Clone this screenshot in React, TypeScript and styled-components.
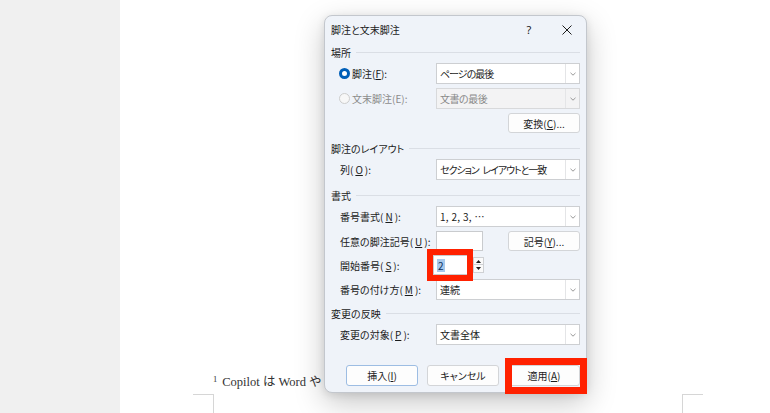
import React from "react";
import styled, { createGlobalStyle, css } from "styled-components";

const GlobalStyle = createGlobalStyle`
  html, body { margin: 0; padding: 0; }
  body { width: 770px; height: 413px; overflow: hidden; background: #ffffff; }
  *, *::before, *::after { box-sizing: border-box; }
`;

const Screen = styled.div`
  display: flex;
  width: 770px;
  height: 413px;
`;

const Gutter = styled.div`
  flex: none;
  width: 120px;
  background: #f0f0f0;
`;

const Page = styled.div`
  position: relative;
  flex: 1;
  background: #ffffff;
  padding: 361px 87px 0 93px;
  display: flex;
  flex-direction: column;
`;

const FootnoteRule = styled.div`
  width: 170px;
  height: 1px;
  background: #a3a3a3;
`;

const FootnoteText = styled.p`
  margin: 10px 0 0;
  font-family: "Liberation Serif", "Noto Sans CJK JP", serif;
  font-size: 12.5px;
  line-height: 16px;
  color: #333333;
  white-space: nowrap;
  sup {
    font-size: 8.5px;
    vertical-align: 4px;
    margin-right: 5px;
  }
`;

const MarkRow = styled.div`
  display: flex;
  justify-content: space-between;
  margin: 4px -20px 0 -20px;
`;

const CornerMark = styled.div<{ $side: "left" | "right" }>`
  width: 21px;
  height: 30px;
  border-top: 1px solid #d6d6d6;
  ${(p) =>
    p.$side === "left"
      ? css`border-right: 1px solid #d6d6d6;`
      : css`border-left: 1px solid #d6d6d6;`}
`;

/* ---------- dialog ---------- */

const Dialog = styled.div`
  position: absolute;
  left: 204px;
  top: 15px;
  width: 263px;
  height: 378px;
  display: flex;
  flex-direction: column;
  background: #eff3f9;
  border: 1px solid #c3c7cd;
  border-radius: 8px;
  box-shadow: 0 10px 30px rgba(0, 0, 0, 0.22), 0 2px 8px rgba(0, 0, 0, 0.1);
  font-family: "Noto Sans CJK JP", "Noto Sans", sans-serif;
  font-feature-settings: "palt";
  font-size: 10px;
  color: #1b1b1b;
`;

const TitleBar = styled.div`
  display: flex;
  align-items: center;
  height: 27px;
  padding-left: 6px;
`;

const Title = styled.div`
  flex: 1;
  font-size: 10px;
`;

const TitleButton = styled.div`
  width: 38px;
  height: 100%;
  display: flex;
  align-items: center;
  justify-content: center;
  font-family: "Noto Sans", sans-serif;
  font-size: 11px;
  color: #1b1b1b;
`;

const Body = styled.div`
  flex: 1;
  display: flex;
  flex-direction: column;
  padding: 2px 6px 0 6px;
`;

const Section = styled.div<{ $mt?: number }>`
  display: flex;
  flex-direction: column;
  gap: 4px;
  margin-top: ${(p) => p.$mt ?? 0}px;
`;

const SectionHeader = styled.div`
  display: flex;
  align-items: center;
  gap: 5px;
  height: 14px;
  &::after {
    content: "";
    flex: 1;
    height: 1px;
    background: #dadee5;
  }
`;

const Row = styled.div<{ $h?: number }>`
  display: grid;
  grid-template-columns: 96px 144px;
  align-items: center;
  height: ${(p) => p.$h ?? 21}px;
  padding-left: 9px;
`;

const Label = styled.div<{ $disabled?: boolean }>`
  display: flex;
  align-items: center;
  gap: 2px;
  white-space: nowrap;
  color: ${(p) => (p.$disabled ? "#8c8c8c" : "#1b1b1b")};
`;

const Key = styled.span`
  text-decoration: underline;
  text-underline-offset: 1px;
`;

const Radio = styled.span<{ $checked?: boolean }>`
  display: inline-block;
  width: 11px;
  height: 11px;
  margin-left: -1px;
  border-radius: 50%;
  ${(p) =>
    p.$checked
      ? css`
          border: 3.5px solid #005fb8;
          background: #ffffff;
        `
      : css`
          border: 1px solid #cdcdcd;
          background: #f7f7f7;
        `}
`;

const Select = styled.div<{ $disabled?: boolean }>`
  display: grid;
  grid-template-columns: 1fr 14px;
  height: 21px;
  border: 1px solid ${(p) => (p.$disabled ? "#d8d9db" : "#cdcfd2")};
  background: ${(p) => (p.$disabled ? "#f3f3f4" : "#ffffff")};
  color: ${(p) => (p.$disabled ? "#8a8a8a" : "#1b1b1b")};
`;

const SelectValue = styled.div<{ $spacing: number }>`
  display: flex;
  align-items: center;
  padding-left: 3px;
  white-space: pre;
  overflow: hidden;
  letter-spacing: ${(p) => p.$spacing}px;
`;

const ChevronCell = styled.div`
  display: flex;
  align-items: center;
  justify-content: center;
  border-left: 1px solid #e4e5e7;
`;

const Chevron = () => (
  <svg width="6" height="4" viewBox="0 0 6 4">
    <polyline points="0.5,0.8 3,3.2 5.5,0.8" fill="none" stroke="#8d8d8d" strokeWidth="0.9" />
  </svg>
);

const Dropdown: React.FC<{ value: string; disabled?: boolean; spacing?: number }> = ({
  value,
  disabled,
  spacing = 0,
}) => (
  <Select $disabled={disabled}>
    <SelectValue $spacing={spacing}>{value}</SelectValue>
    <ChevronCell>
      <Chevron />
    </ChevronCell>
  </Select>
);

const ButtonRow = styled.div`
  display: flex;
  justify-content: flex-end;
  height: 20px;
`;

const PushButton = styled.button<{ $default?: boolean; $h?: number }>`
  width: 72px;
  height: ${(p) => p.$h ?? 20}px;
  padding: 0;
  font-family: inherit;
  font-feature-settings: inherit;
  font-size: 10px;
  color: #1b1b1b;
  background: #fdfdfd;
  border: 1px solid ${(p) => (p.$default ? "#9dbde3" : "#d3d5d8")};
  border-radius: 3px;
`;

const FieldPair = styled.div`
  display: flex;
  align-items: center;
  justify-content: space-between;
`;

const TextBox = styled.div<{ $w: number }>`
  width: ${(p) => p.$w}px;
  height: 20px;
  border: 1px solid #c9cbce;
  background: #ffffff;
  display: flex;
  align-items: center;
  padding-left: 3px;
`;

const SpinField = styled.div`
  display: flex;
  align-items: center;
  gap: 5px;
  margin-left: -3px;
`;

const Highlight = styled.div<{ $t: number; $r: number; $b: number; $l: number; $w: number }>`
  position: relative;
  display: flex;
  &::after {
    content: "";
    position: absolute;
    top: ${(p) => -p.$t}px;
    right: ${(p) => -p.$r}px;
    bottom: ${(p) => -p.$b}px;
    left: ${(p) => -p.$l}px;
    border: ${(p) => p.$w}px solid #ff2100;
    pointer-events: none;
  }
`;

const Selected = styled.span`
  background: #a7c9ec;
  color: #10305c;
  padding: 0 1px;
  line-height: 13px;
`;

const Spinner = styled.div`
  display: flex;
  flex-direction: column;
  width: 11px;
`;

const SpinButton = styled.div`
  height: 8px;
  display: flex;
  align-items: center;
  justify-content: center;
  background: #fafafa;
  border: 1px solid #cfd1d4;
  & + & {
    border-top: none;
  }
`;

const Footer = styled.div`
  display: flex;
  justify-content: flex-end;
  gap: 9px;
  margin-top: auto;
  padding: 0 6px 6px 0;
`;

const CloseIcon = () => (
  <svg width="10" height="10" viewBox="0 0 10 10">
    <path d="M0.5 0.5 L9.5 9.5 M9.5 0.5 L0.5 9.5" stroke="#1b1b1b" strokeWidth="1" />
  </svg>
);

const Tri = ({ up }: { up?: boolean }) => (
  <svg width="5" height="3" viewBox="0 0 5 3">
    <polygon points={up ? "0,3 5,3 2.5,0" : "0,0 5,0 2.5,3"} fill="#1b1b1b" />
  </svg>
);

export default function App() {
  return (
    <>
      <GlobalStyle />
      <Screen>
        <Gutter />
        <Page>
          <FootnoteRule />
          <FootnoteText>
            <sup>1</sup>Copilot は Word や
          </FootnoteText>
          <MarkRow>
            <CornerMark $side="left" />
            <CornerMark $side="right" />
          </MarkRow>

          <Dialog>
            <TitleBar>
              <Title>脚注と文末脚注</Title>
              <TitleButton>?</TitleButton>
              <TitleButton>
                <CloseIcon />
              </TitleButton>
            </TitleBar>
            <Body>
              <Section>
                <SectionHeader>場所</SectionHeader>
                <Row>
                  <Label>
                    <Radio $checked />
                    <span>
                      脚注(<Key>F</Key>):
                    </span>
                  </Label>
                  <Dropdown value="ページの最後" spacing={-1} />
                </Row>
                <Row>
                  <Label $disabled>
                    <Radio />
                    <span>文末脚注(E):</span>
                  </Label>
                  <Dropdown value="文書の最後" disabled spacing={-0.5} />
                </Row>
                <ButtonRow>
                  <PushButton>
                    変換(<Key>C</Key>)...
                  </PushButton>
                </ButtonRow>
              </Section>

              <Section $mt={8}>
                <SectionHeader>脚注のレイアウト</SectionHeader>
                <Row>
                  <Label>
                    列(<Key>O</Key>):
                  </Label>
                  <Dropdown value={"セクション\u2002レイアウトと一致"} spacing={-1.1} />
                </Row>
              </Section>

              <Section $mt={8}>
                <SectionHeader>書式</SectionHeader>
                <Row>
                  <Label>
                    番号書式(<Key>N</Key>):
                  </Label>
                  <Dropdown value="1, 2, 3, …" spacing={0.3} />
                </Row>
                <Row $h={20}>
                  <Label>
                    任意の脚注記号(<Key>U</Key>):
                  </Label>
                  <FieldPair>
                    <TextBox $w={47} />
                    <PushButton>
                      記号(<Key>Y</Key>)...
                    </PushButton>
                  </FieldPair>
                </Row>
                <Row $h={20}>
                  <Label>
                    開始番号(<Key>S</Key>):
                  </Label>
                  <SpinField>
                    <Highlight $t={6} $r={5} $b={6} $l={6} $w={6}>
                      <TextBox $w={35}>
                        <Selected>2</Selected>
                      </TextBox>
                    </Highlight>
                    <Spinner>
                      <SpinButton>
                        <Tri up />
                      </SpinButton>
                      <SpinButton>
                        <Tri />
                      </SpinButton>
                    </Spinner>
                  </SpinField>
                </Row>
                <Row>
                  <Label>
                    番号の付け方(<Key>M</Key>):
                  </Label>
                  <Dropdown value="連続" />
                </Row>
              </Section>

              <Section $mt={6}>
                <SectionHeader>変更の反映</SectionHeader>
                <Row>
                  <Label>
                    変更の対象(<Key>P</Key>):
                  </Label>
                  <Dropdown value="文書全体" />
                </Row>
              </Section>
            </Body>
            <Footer>
              <PushButton $default $h={21}>
                挿入(<Key>I</Key>)
              </PushButton>
              <PushButton $h={21}>キャンセル</PushButton>
              <Highlight $t={7} $r={7} $b={8} $l={3} $w={7}>
                <PushButton $h={21}>
                  適用(<Key>A</Key>)
                </PushButton>
              </Highlight>
            </Footer>
          </Dialog>
        </Page>
      </Screen>
    </>
  );
}
